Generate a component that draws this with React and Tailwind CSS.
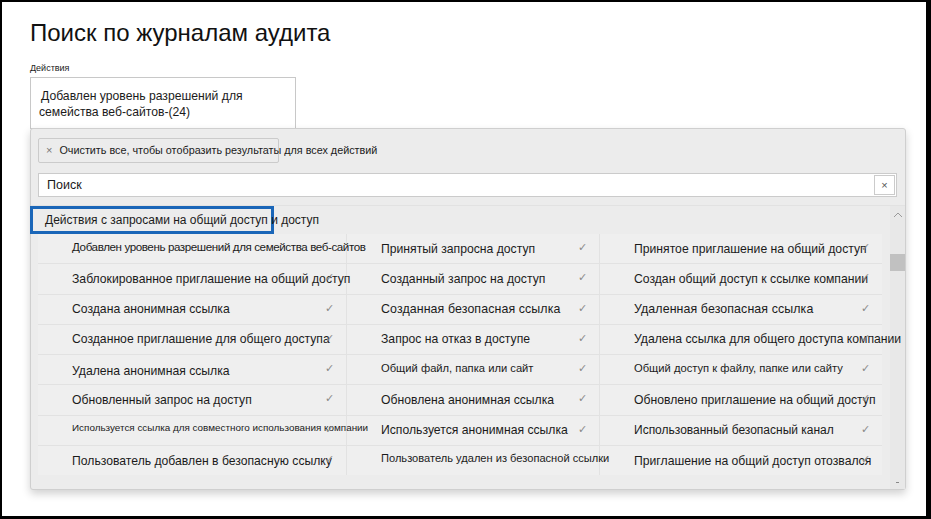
import React from 'react'

const rows = [
  [
    { t: 'Добавлен уровень разрешений для семейства веб-сайтов', c: 'text-[11.6px] tracking-[-0.4px] -translate-y-[2px]', check: false },
    { t: 'Принятый запросна доступ', c: 'text-[12.2px]' },
    { t: 'Принятое приглашение на общий доступ', c: 'text-[12.2px]' },
  ],
  [
    { t: 'Заблокированное приглашение на общий доступ', c: 'text-[12.2px]' },
    { t: 'Созданный запрос на доступ', c: 'text-[12.2px]' },
    { t: 'Создан общий доступ к ссылке компании', c: 'text-[12.2px]' },
  ],
  [
    { t: 'Создана анонимная ссылка', c: 'text-[12.2px]' },
    { t: 'Созданная безопасная ссылка', c: 'text-[12.4px] tracking-[0.1px]' },
    { t: 'Удаленная безопасная ссылка', c: 'text-[12.4px] tracking-[0.1px]' },
  ],
  [
    { t: 'Созданное приглашение для общего доступа', c: 'text-[12.2px]' },
    { t: 'Запрос на отказ в доступе', c: 'text-[12.2px]' },
    { t: 'Удалена ссылка для общего доступа компании', c: 'text-[12.2px]' },
  ],
  [
    { t: 'Удалена анонимная ссылка', c: 'text-[12.2px] translate-y-[1px]' },
    { t: 'Общий файл, папка или сайт', c: 'text-[11.2px] -translate-y-[1px]' },
    { t: 'Общий доступ к файлу, папке или сайту', c: 'text-[11.2px] -translate-y-[1px]' },
  ],
  [
    { t: 'Обновленный запрос на доступ', c: 'text-[12.2px]' },
    { t: 'Обновлена анонимная ссылка', c: 'text-[12.2px]' },
    { t: 'Обновлено приглашение на общий доступ', c: 'text-[12.2px]' },
  ],
  [
    { t: 'Используется ссылка для совместного использования компании', c: 'text-[9.9px] -translate-y-[2px]' },
    { t: 'Используется анонимная ссылка', c: 'text-[12.2px]' },
    { t: 'Использованный безопасный канал', c: 'text-[12px]' },
  ],
  [
    { t: 'Пользователь добавлен в безопасную ссылку', c: 'text-[12.2px]' },
    { t: 'Пользователь удален из безопасной ссылки', c: 'text-[11.1px] -translate-y-[2px]', check: false },
    { t: 'Приглашение на общий доступ отозвался', c: 'text-[12.2px]' },
  ],
]

const widths = ['w-[308px]', 'w-[252px]', 'w-[282px]']

const Cell = ({ item, width }) => (
  <div className={`relative ${width} h-full bg-[#efefef] flex items-center pl-[34px]`}>
    <span className={`relative z-10 whitespace-nowrap text-[#1b1b1b] ${item.c}`}>{item.t}</span>
    {item.check !== false && (
      <span className="absolute z-20 right-[12px] top-[5px] text-[11px] text-[#8a8a8a]">✓</span>
    )}
  </div>
)

export default function App() {
  return (
    <div
      className="w-[931px] h-[519px] bg-white border-l-2 border-t-2 border-r-[5px] border-b-[3px] border-black overflow-hidden"
      style={{ fontFamily: '"Liberation Sans", Arial, sans-serif' }}
    >
      <div className="pl-[28px]">
        <h1 className="pt-[17px] text-[24px] leading-[28px] text-[#111] font-normal">Поиск по журналам аудита</h1>
        <div className="mt-[16px] text-[9px] leading-[10px] text-[#222]">Действия</div>
        <div className="mt-[4px] w-[266px] h-[52px] border border-[#c8c8c8] bg-white px-[8px] pt-[10px] text-[12.2px] leading-[16px] text-[#1b1b1b]">
          <div className="pl-[2px]">Добавлен уровень разрешений для</div>
          <div>семейства веб-сайтов-(24)</div>
        </div>

        <div className="w-[876px] h-[362px] -mt-px bg-[#ececec] border border-[#cfcfcf] rounded-[3px] shadow-[0_4px_8px_rgba(0,0,0,0.18)] flex flex-col">
          <div className="pl-[7px] pt-[9px]">
            <div className="w-[241px] h-[25px] border border-[#cbcbcb] rounded-[2px] flex items-center pl-[7px] text-[10.8px] text-[#1b1b1b] whitespace-nowrap">
              <span className="text-[#777] text-[11px] mr-[7px]">×</span>
              <span>Очистить все, чтобы отобразить результаты для всех действий</span>
            </div>
            <div className="mt-[10px] w-[859px] h-[24px] bg-white border border-[#cbcbcb] flex items-center justify-between">
              <span className="pl-[8px] text-[12.5px] text-[#1b1b1b]">Поиск</span>
              <span className="mr-[1px] w-[21px] h-[20px] border border-[#cbcbcb] flex items-center justify-center text-[11px] text-[#555]">×</span>
            </div>
          </div>

          <div className="mt-[8px] flex flex-1 border-t border-[#e2e2e2]">
            <div className="flex-1 flex flex-col">
              <div className="h-[28px] relative">
                <div className="absolute -left-px top-0 w-[244px] h-[28px] border-[3px] border-[#1a66b8]"></div>
                <span className="relative pl-[14px] leading-[28px] text-[12px] text-[#1b1b1b] whitespace-nowrap">
                  Действия с запросами на общий доступ и доступ
                </span>
              </div>
              <div className="ml-[7px] w-[844px] bg-[#e2e2e2] flex flex-col gap-px">
                {rows.map((row, i) => (
                  <div key={i} className="flex h-[29.3px] gap-px">
                    {row.map((item, j) => (
                      <Cell key={j} item={item} width={widths[j]} />
                    ))}
                  </div>
                ))}
              </div>
            </div>
            <div className="w-[15px] bg-[#e8e8e8] flex flex-col items-center">
              <svg width="10" height="6" viewBox="0 0 10 6" className="mt-[6px]">
                <path d="M1 5 L5 1 L9 5" fill="none" stroke="#9a9a9a" strokeWidth="1" />
              </svg>
              <div className="mt-[36px] w-[15px] h-[17px] bg-[#c1c1c1]"></div>
              <div className="flex-1"></div>
              <div className="mb-[6px] w-[3px] h-px bg-[#888]"></div>
            </div>
          </div>
        </div>
      </div>
    </div>
  )
}
